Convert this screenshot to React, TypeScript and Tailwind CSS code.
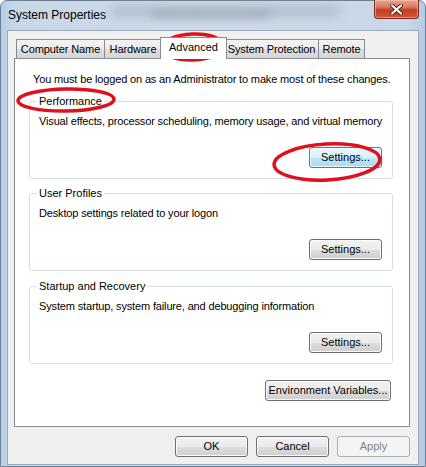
import React from 'react';

const btn =
  'h-[21px] rounded-[3px] border border-[#707070] bg-[linear-gradient(to_bottom,#f2f2f2_0%,#ebebeb_50%,#dddddd_51%,#cfcfcf_100%)] text-[11px] leading-none text-black flex items-center justify-center shadow-[inset_0_0_0_1px_#fcfcfc]';
const btnHot =
  'h-[21px] rounded-[3px] border border-[#3c7fb1] bg-[linear-gradient(to_bottom,#eaf6fd_0%,#d9f0fc_50%,#bee6fd_51%,#a7d9f5_100%)] text-[11px] leading-none text-black flex items-center justify-center shadow-[inset_0_0_0_1px_#f4fbfe]';
const btnOff =
  'h-[21px] rounded-[3px] border border-[#adb2b5] bg-[#f4f4f4] text-[11px] leading-none text-[#838383] flex items-center justify-center';

type TabProps = { label: string; width: number; selected?: boolean };

const Tab: React.FC<TabProps> = ({ label, width, selected }) => {
  if (selected) {
    return (
      <div
        className="relative z-10 -mx-[2px] -mb-px h-[22px] border border-b-0 border-[#898c95] bg-white flex items-center justify-center text-[11px] pb-[2px]"
        style={{ width: width + 4 }}
      >
        {label}
      </div>
    );
  }
  return (
    <div
      className="h-[19px] -ml-px first:ml-0 border border-b-0 border-[#898c95] bg-[linear-gradient(to_bottom,#f3f3f3_0%,#ebebeb_50%,#dedede_51%,#d6d6d6_100%)] flex items-center justify-center text-[11px] tracking-[-0.1px]"
      style={{ width }}
    >
      {label}
    </div>
  );
};

type GroupProps = { title: string; text: string; hot?: boolean; className?: string };

const Group: React.FC<GroupProps> = ({ title, text, hot, className }) => (
  <fieldset className={`border border-[#d5dfe5] rounded-[3px] pb-[10px] ${className ?? ''}`}>
    <legend className="ml-[7px] px-[2px] text-[11px] leading-[13px]">{title}</legend>
    <div className="pl-[9px] pt-[7px] text-[11px] leading-[13px] whitespace-nowrap tracking-[-0.15px]">{text}</div>
    <div className="flex justify-end pr-[10px] mt-[19px]">
      <button className={`${hot ? btnHot : btn} w-[73px]`}>Settings...</button>
    </div>
  </fieldset>
);

export default function App() {
  return (
    <div className="w-[426px] h-[467px] bg-white font-['Liberation_Sans','Arial',sans-serif] text-black overflow-hidden">
      <div className="relative w-full h-full rounded-t-[7px] border border-[#6f7f94] bg-[linear-gradient(to_right,#b9cfe8_0%,#c9d8e8_4%,#cdd9e6_50%,#c9d7e7_96%,#b5cbe6_100%)] flex flex-col px-[6px] pb-[1px]">
        {/* blurred glass smudges */}
        <div className="absolute left-[110px] top-[4px] w-[230px] h-[12px] rounded-full bg-[#8f9caa] opacity-40 blur-[5px]" />
        <div className="absolute left-[150px] top-[10px] w-[120px] h-[8px] rounded-full bg-[#6f7d8c] opacity-30 blur-[4px]" />

        <div className="relative h-[29px] flex items-start justify-between">
          <span className="pt-[7px] pl-[1px] text-[12px] leading-[14px] text-black">System Properties</span>
          <div className="-mt-px w-[45px] h-[19px] rounded-b-[4px] border border-t-0 border-[#7a2a1a] bg-[linear-gradient(to_bottom,#e9a593_0%,#d77a62_40%,#c4401f_55%,#d0553a_100%)] flex items-center justify-center shadow-[inset_0_0_0_1px_rgba(255,210,200,0.5)]">
            <svg width="13" height="11" viewBox="0 0 13 11">
              <path d="M2 1.5 L11 9.5 M11 1.5 L2 9.5" stroke="#5b1e12" strokeWidth="4" strokeLinecap="round" />
              <path d="M2 1.5 L11 9.5 M11 1.5 L2 9.5" stroke="#ffffff" strokeWidth="2.2" strokeLinecap="round" />
            </svg>
          </div>
        </div>

        <div className="relative flex-1 flex flex-col border border-[#9aa9bb] bg-[#f0f0f0] pl-[6px] pr-[8px]">
          <div className="flex items-end h-[27px] pl-[2px]">
            <Tab label="Computer Name" width={89} />
            <Tab label="Hardware" width={58} />
            <Tab label="Advanced" width={63} selected />
            <Tab label="System Protection" width={95} />
            <Tab label="Remote" width={47} />
          </div>

          <div className="h-[369px] border border-[#898c95] bg-white flex flex-col pl-[14px] pr-[16px]">
            <div className="pt-[14px] pl-[4px] text-[11px] leading-[13px] whitespace-nowrap tracking-[-0.15px]">
              You must be logged on as an Administrator to make most of these changes.
            </div>
            <Group
              className="mt-[9px]"
              title="Performance"
              text="Visual effects, processor scheduling, memory usage, and virtual memory"
              hot
            />
            <Group className="mt-[8px]" title="User Profiles" text="Desktop settings related to your logon" />
            <Group
              className="mt-[9px]"
              title="Startup and Recovery"
              text="System startup, system failure, and debugging information"
            />
            <div className="flex justify-end mt-[16px] pr-[2px]">
              <button className={`${btn} w-[126px]`}>Environment Variables...</button>
            </div>
          </div>

          <div className="flex justify-end gap-[8px] mt-[9px]">
            <button className={`${btn} w-[73px]`}>OK</button>
            <button className={`${btn} w-[73px]`}>Cancel</button>
            <button className={`${btnOff} w-[73px]`}>Apply</button>
          </div>
        </div>

        {/* red annotation marks */}
        <svg className="absolute left-[-1px] top-[-1px] pointer-events-none" width="426" height="467" viewBox="0 0 426 467">
          <g fill="none" stroke="#e0101c" strokeWidth="3.5">
            <ellipse cx="193" cy="47" rx="31" ry="13" transform="rotate(-2 193 47)" />
            <ellipse cx="66" cy="100" rx="48" ry="11" transform="rotate(-1 66 100)" />
            <ellipse cx="327" cy="162" rx="53" ry="18" transform="rotate(-3 327 162)" />
          </g>
        </svg>
      </div>
    </div>
  );
}
